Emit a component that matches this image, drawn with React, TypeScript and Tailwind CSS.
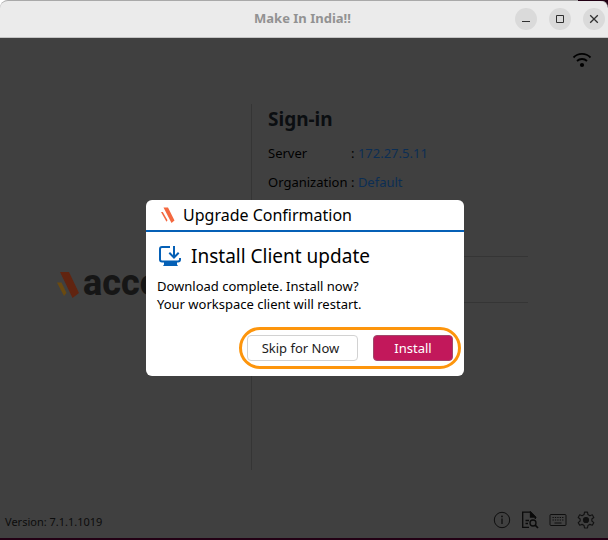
import type { ReactNode } from "react";

interface BarButtonProps {
  label: string;
  children: ReactNode;
}

export default function App() {
  return (
    <div className="flex min-h-screen flex-col bg-[#220014] font-['Noto_Sans','Open_Sans',sans-serif] text-black">
      <TitleBar />
      <main className="relative flex flex-1 flex-col bg-[#404040]">
        <div className="flex justify-end px-4 pt-3">
          <WifiIcon />
        </div>

        <div className="flex min-h-[366px] flex-1 pt-[34px]">
          <div className="flex w-[251px] shrink-0 items-center pb-1 pl-14">
            <BrandMark />
            <span className="pb-1 font-['Roboto',sans-serif] text-4xl leading-9 font-extrabold text-[#161616]">
              acco
            </span>
          </div>
          <SignIn />
        </div>

        <footer className="flex items-center justify-between px-[5px] pt-10 pb-2">
          <span className="pt-1 text-[11px] leading-4 text-[#0c0c0c]">Version: 7.1.1.1019</span>
          <div className="flex items-center gap-2 pr-[7px]">
            <BarButton label="About">
              <InfoIcon />
            </BarButton>
            <BarButton label="View logs">
              <LogIcon />
            </BarButton>
            <BarButton label="Keyboard">
              <KeyboardIcon />
            </BarButton>
            <BarButton label="Settings">
              <GearIcon />
            </BarButton>
          </div>
        </footer>

        <div className="absolute inset-0 flex items-center justify-center pl-0.5">
          <UpgradeDialog />
        </div>
      </main>
      <div className="h-0.5" />
    </div>
  );
}

function TitleBar() {
  return (
    <div className="relative bg-linear-to-r from-white from-50% to-[#220014] to-50%">
      <header className="flex h-[38px] items-center rounded-t-lg border-t border-b border-t-[#a9a9a9] border-b-[#c4c4c4] bg-[#ebebeb]">
        <div className="flex-1" />
        <h1 className="text-[13px] font-bold text-[#929292]">Make In India!!</h1>
        <div className="flex flex-1 justify-end gap-3 pr-[3px]">
          <button aria-label="Minimize" className="flex size-[22px] items-center justify-center rounded-full bg-[#dadada]">
            <svg width="22" height="22" viewBox="0 0 22 22" aria-hidden="true">
              <path d="M7 13.5h8" stroke="#303030" />
            </svg>
          </button>
          <button aria-label="Maximize" className="flex size-[22px] items-center justify-center rounded-full bg-[#dadada]">
            <svg width="22" height="22" viewBox="0 0 22 22" aria-hidden="true">
              <path d="M7.5 7.5h7v7h-7z" fill="none" stroke="#303030" />
            </svg>
          </button>
          <button aria-label="Close" className="flex size-[22px] items-center justify-center rounded-full bg-[#dadada]">
            <svg width="22" height="22" viewBox="0 0 22 22" aria-hidden="true">
              <path d="m7.2 7.2 7.6 7.6m0-7.6-7.6 7.6" stroke="#303030" strokeWidth="1.3" />
            </svg>
          </button>
        </div>
      </header>
      <div className="absolute top-0 right-0 h-px w-[30px] bg-[#220014]" />
    </div>
  );
}

function SignIn() {
  return (
    <section className="min-w-0 flex-1 border-l border-[#353535] pl-4">
      <h2 className="text-[19px] leading-[30px] font-bold text-[#0b0e11]">Sign-in</h2>
      <dl className="mt-[5px] grid grid-cols-[83px_1fr] text-[13px] leading-[29px]">
        <dt>Server</dt>
        <dd>
          : <span className="text-[#0c2e54]">172.27.5.11</span>
        </dd>
        <dt>Organization</dt>
        <dd>
          : <span className="text-[#0c2e54]">Default</span>
        </dd>
      </dl>
      <form className="mt-[30px] w-[260px]">
        <input
          aria-label="Username"
          className="block h-[30px] w-full border-b border-[#353535] bg-transparent text-[13px] outline-none"
        />
        <input
          aria-label="Password"
          type="password"
          className="mt-4 block h-[30px] w-full border-b border-[#353535] bg-transparent text-[13px] outline-none"
        />
      </form>
    </section>
  );
}

function UpgradeDialog() {
  return (
    <div
      role="dialog"
      aria-modal="true"
      aria-labelledby="upgrade-title"
      className="w-[318px] rounded-md bg-white"
    >
      <div className="flex h-8 items-center gap-2 border-b-2 border-[#0560b6] px-[14px]">
        <svg width="15" height="18" viewBox="0 0 15 18" fill="#f4683f" aria-hidden="true">
          <path d="M3.5 1.5H8L14.5 14.5 11.5 17z" />
          <path d="M1 6h1.8l4.7 8.2-1 1.6z" />
        </svg>
        <h2 id="upgrade-title" className="text-base leading-6">
          Upgrade Confirmation
        </h2>
      </div>
      <div className="px-[11px] pt-2.5">
        <div className="flex items-center gap-2">
          <svg width="26" height="26" viewBox="0 0 26 26" fill="none" stroke="#0560b6" strokeWidth="2" aria-hidden="true">
            <path d="M13 4H5a2 2 0 0 0-2 2V16.500a2 2 0 0 0 2 2h16a2 2 0 0 0 2-2V15" />
            <path d="M17 3v11M12.300 9.800l4.700 4.700 4.700-4.700" />
            <path d="M7 18.500h13v3l1 1.500H6l1-1.500z" fill="#0560b6" stroke="none" />
          </svg>
          <h3 className="text-[19px] leading-7">Install Client update</h3>
        </div>
        <p className="mt-[7px] text-[13px] leading-[18px]">
          Download complete. Install now?
          <br />
          Your workspace client will restart.
        </p>
      </div>
      <div className="mt-3.5 flex justify-end pr-[3px] pb-[7px]">
        <div className="flex gap-[15px] rounded-full border-3 border-[#fd950c] p-[5px]">
          <button className="h-[26px] w-[111px] rounded border border-[#d2d2d2] bg-white pr-1 text-[13px] leading-6 text-[#1c1c1c]">
            Skip for Now
          </button>
          <button className="h-[26px] w-20 rounded border border-[#a0486b] bg-[#c2185b] text-[13px] leading-6 text-white">
            Install
          </button>
        </div>
      </div>
    </div>
  );
}

function BarButton({ label, children }: BarButtonProps) {
  return (
    <button type="button" aria-label={label} className="flex size-5 items-center justify-center">
      {children}
    </button>
  );
}

function BrandMark() {
  return (
    <svg width="26" height="30" viewBox="0 0 26 30" className="mr-px shrink-0" aria-hidden="true">
      <path d="M4 2h9l10 21-6.500 5z" fill="#612410" />
      <path d="M1 12.500h4.500L10.500 23 8 26z" fill="#6a4a10" />
    </svg>
  );
}

function WifiIcon() {
  return (
    <svg width="20" height="20" viewBox="0 0 20 20" fill="none" stroke="#000" strokeWidth="1.8" aria-hidden="true">
      <path d="M1.500 7.500a12 12 0 0 1 17 0" />
      <path d="M5 11a7.200 7.200 0 0 1 10 0" />
      <circle cx="10" cy="15" r="2.100" fill="#000" stroke="none" />
    </svg>
  );
}

function InfoIcon() {
  return (
    <svg width="18" height="18" viewBox="0 0 18 18" fill="none" stroke="#0e0e0e" aria-hidden="true">
      <circle cx="9" cy="9" r="7.700" />
      <path d="M9 7.500V13" strokeWidth="1.300" />
      <circle cx="9" cy="5.400" r="0.900" fill="#0e0e0e" stroke="none" />
    </svg>
  );
}

function LogIcon() {
  return (
    <svg width="18" height="18" viewBox="0 0 18 18" fill="none" stroke="#0a0a0a" strokeWidth="1.300" aria-hidden="true">
      <path d="M8 16.300H1.700V1.200H9.500L14.300 6V8" />
      <path d="M9.500 1.200V6H14.300z" fill="#0a0a0a" />
      <path d="M4.500 9.500h3.500M4.500 12.500h2.500" />
      <circle cx="12" cy="12" r="3" />
      <path d="m14.200 14.200 2.800 2.800" strokeWidth="1.700" />
    </svg>
  );
}

function KeyboardIcon() {
  return (
    <svg width="18" height="18" viewBox="0 0 18 18" fill="none" stroke="#0e0e0e" aria-hidden="true">
      <rect x="1" y="3.500" width="16" height="11" rx="1" />
      <path d="M3.500 6.500h11M3.500 9h11" strokeDasharray="1.300 1.100" />
      <path d="M5.500 12h7" />
    </svg>
  );
}

function GearIcon() {
  return (
    <svg width="18" height="18" viewBox="0 0 24 24" fill="none" stroke="#121212" strokeWidth="1.500" strokeLinejoin="round" aria-hidden="true">
      <path d="M10 1.500h4l.6 3.300 2.600 1.500 3.200-1.200 2 3.500-2.600 2.100v2.700l2.600 2.100-2 3.500-3.200-1.200-2.600 1.500-.6 3.300h-4l-.6-3.300-2.600-1.500-3.200 1.200-2-3.500 2.600-2.100v-2.700L1.600 8.600l2-3.500 3.200 1.200 2.600-1.500z" />
      <circle cx="12" cy="12" r="3.400" fill="#121212" />
    </svg>
  );
}
